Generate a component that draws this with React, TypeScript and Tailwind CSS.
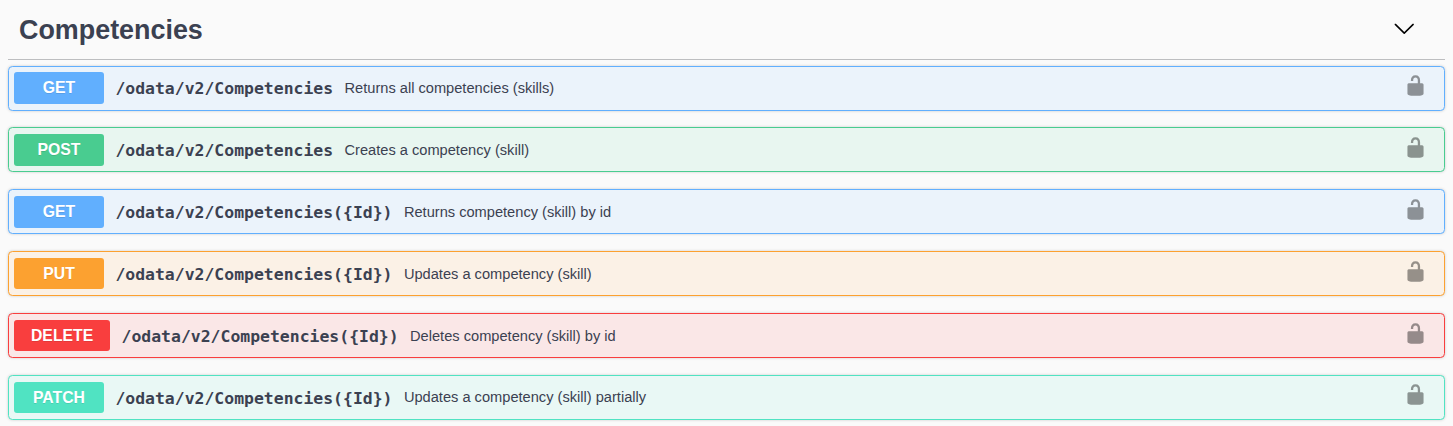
import React, { FC } from "react";

interface Operation {
  method: string;
  path: string;
  summary: string;
  rowClass: string;
  badgeClass: string;
}

const operations: Operation[] = [
  {
    method: "GET",
    path: "/odata/v2/Competencies",
    summary: "Returns all competencies (skills)",
    rowClass: "border-[#61affe] bg-[#ebf3fb]",
    badgeClass: "bg-[#61affe]",
  },
  {
    method: "POST",
    path: "/odata/v2/Competencies",
    summary: "Creates a competency (skill)",
    rowClass: "border-[#49cc90] bg-[#e8f6f0]",
    badgeClass: "bg-[#49cc90]",
  },
  {
    method: "GET",
    path: "/odata/v2/Competencies({Id})",
    summary: "Returns competency (skill) by id",
    rowClass: "border-[#61affe] bg-[#ebf3fb]",
    badgeClass: "bg-[#61affe]",
  },
  {
    method: "PUT",
    path: "/odata/v2/Competencies({Id})",
    summary: "Updates a competency (skill)",
    rowClass: "border-[#fca130] bg-[#fbf1e6]",
    badgeClass: "bg-[#fca130]",
  },
  {
    method: "DELETE",
    path: "/odata/v2/Competencies({Id})",
    summary: "Deletes competency (skill) by id",
    rowClass: "border-[#f93e3e] bg-[#fae7e7]",
    badgeClass: "bg-[#f93e3e]",
  },
  {
    method: "PATCH",
    path: "/odata/v2/Competencies({Id})",
    summary: "Updates a competency (skill) partially",
    rowClass: "border-[#50e3c2] bg-[#e9f8f5]",
    badgeClass: "bg-[#50e3c2]",
  },
];

const ArrowDown: FC = () => (
  <svg viewBox="0 0 20 20" className="size-[22.5px]" fill="black">
    <path d="M17.418 6.109c.272-.268.709-.268.979 0s.271.701 0 .969l-7.908 7.83c-.27.268-.707.268-.979 0l-7.908-7.83c-.27-.268-.27-.701 0-.969.271-.268.709-.268.979 0L10 13.25l7.418-7.141z" />
  </svg>
);

const Unlocked: FC = () => (
  <svg viewBox="0 0 20 20" className="size-[23px] opacity-40" fill="black">
    <path d="M15.8 8H14V5.6C14 2.703 12.665 1 10 1 7.334 1 6 2.703 6 5.6V6h2v-.801C8 3.754 8.797 3 10 3c1.203 0 2 .754 2 2.199V8H4c-.553 0-1 .646-1 1.199V17c0 .549.428 1.139.951 1.307l1.197.387C5.672 18.861 6.55 19 7.1 19h5.8c.549 0 1.428-.139 1.951-.307l1.196-.387c.524-.167.953-.757.953-1.306V9.199C17 8.646 16.352 8 15.8 8z" />
  </svg>
);

const OperationRow: FC<{ operation: Operation }> = ({ operation }) => {
  const { method, path, summary, rowClass, badgeClass } = operation;

  return (
    <div
      className={`flex h-[45px] items-center rounded-[4.5px] border px-[5px] shadow-[0_0_3px_rgba(0,0,0,0.19)] ${rowClass}`}>
      <span
        className={`flex h-[31.5px] min-w-[90px] items-center justify-center rounded-[3px] px-[17px] pb-[0.2px] text-[15.75px] font-bold text-white [text-shadow:0_1px_0_rgba(0,0,0,0.1)] ${badgeClass}`}>
        {method}
      </span>
      <span className="px-[11.4px] pt-[2.8px] font-['DejaVu_Sans_Mono',monospace] text-[16.45px] font-bold">
        {path}
      </span>
      <span className="flex-1 pt-[1.8px] text-[14.63px]">{summary}</span>
      <button className="mr-[12px] mb-[5px]">
        <Unlocked />
      </button>
    </div>
  );
};

const App: FC = () => {
  return (
    <div className="h-[426px] overflow-hidden bg-[#fafafa] px-2 font-['Liberation_Sans',Arial,sans-serif] text-[#3b4151]">
      <div className="mb-[5.6px] flex h-[60px] items-center justify-between border-b border-[#bdbec0] pr-[30px] pl-[11px]">
        <h3 className="pt-px text-[26.9px] font-bold">Competencies</h3>
        <button className="mb-[3px]">
          <ArrowDown />
        </button>
      </div>
      <div className="flex flex-col gap-[16.875px]">
        {operations.map((operation) => (
          <OperationRow
            key={operation.method + operation.path}
            operation={operation}
          />
        ))}
      </div>
    </div>
  );
};

export default App;
